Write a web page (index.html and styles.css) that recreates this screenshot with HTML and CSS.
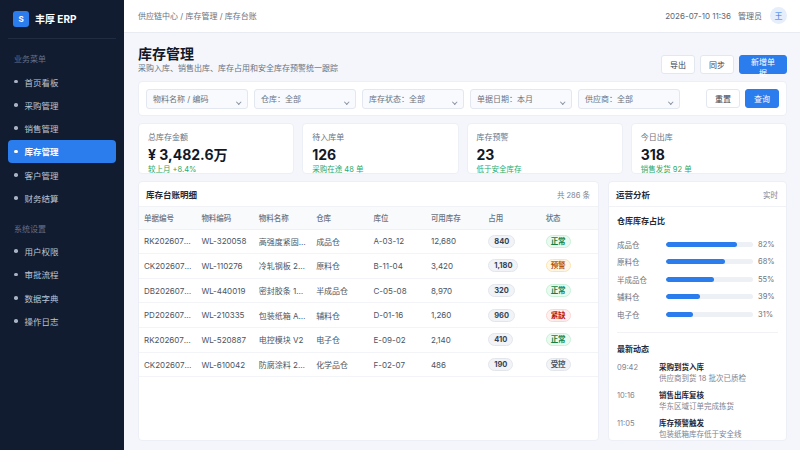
FILE: index.html
```html
<!DOCTYPE html>
<html lang="zh-CN">
<head>
<meta charset="utf-8">
<title>丰厚 ERP</title>
<link rel="stylesheet" href="styles.css">
</head>
<body>
<div class="app">
  <aside class="sidebar">
    <div class="brand"><span class="logo">S</span><span class="brand-name">丰厚 ERP</span></div>
    <div class="nav-label">业务菜单</div>
    <nav class="nav">
      <a class="nav-item"><i></i>首页看板</a>
      <a class="nav-item"><i></i>采购管理</a>
      <a class="nav-item"><i></i>销售管理</a>
      <a class="nav-item active"><i></i>库存管理</a>
      <a class="nav-item"><i></i>客户管理</a>
      <a class="nav-item"><i></i>财务结算</a>
    </nav>
    <div class="nav-label second">系统设置</div>
    <nav class="nav">
      <a class="nav-item"><i></i>用户权限</a>
      <a class="nav-item"><i></i>审批流程</a>
      <a class="nav-item"><i></i>数据字典</a>
      <a class="nav-item"><i></i>操作日志</a>
    </nav>
  </aside>
  <div class="main">
    <header class="topbar">
      <div class="crumbs">供应链中心 / 库存管理 / 库存台账</div>
      <div class="top-right"><span>2026-07-10 11:36</span><span>管理员</span><span class="avatar">王</span></div>
    </header>
    <div class="content">
      <div class="page-head">
        <div>
          <h1>库存管理</h1>
          <p>采购入库、销售出库、库存占用和安全库存预警统一跟踪</p>
        </div>
        <div class="actions">
          <button class="btn">导出</button>
          <button class="btn">同步</button>
          <button class="btn primary wide">新增单据</button>
        </div>
      </div>
      <div class="card filters">
        <div class="select">物料名称 / 编码</div>
        <div class="select">仓库：全部</div>
        <div class="select">库存状态：全部</div>
        <div class="select">单据日期：本月</div>
        <div class="select">供应商：全部</div>
        <div class="filter-btns">
          <button class="btn">重置</button>
          <button class="btn primary">查询</button>
        </div>
      </div>
      <div class="stats">
        <div class="card stat"><div class="stat-label">总库存金额</div><div class="stat-value">¥ 3,482.6万</div><div class="stat-note">较上月 +8.4%</div></div>
        <div class="card stat"><div class="stat-label">待入库单</div><div class="stat-value">126</div><div class="stat-note">采购在途 48 单</div></div>
        <div class="card stat"><div class="stat-label">库存预警</div><div class="stat-value">23</div><div class="stat-note">低于安全库存</div></div>
        <div class="card stat"><div class="stat-label">今日出库</div><div class="stat-value">318</div><div class="stat-note">销售发货 92 单</div></div>
      </div>
      <div class="panels">
        <section class="card panel table-panel">
          <div class="panel-head"><h2>库存台账明细</h2><span>共 286 条</span></div>
          <table>
            <thead><tr><th>单据编号</th><th>物料编码</th><th>物料名称</th><th>仓库</th><th>库位</th><th>可用库存</th><th>占用</th><th>状态</th></tr></thead>
            <tbody>
              <tr><td>RK20260710001</td><td>WL-320058</td><td>高强度紧固件套装</td><td>成品仓</td><td>A-03-12</td><td>12,680</td><td><b class="pill">840</b></td><td><b class="tag ok">正常</b></td></tr>
              <tr><td>CK20260710002</td><td>WL-110276</td><td>冷轧钢板 2.0mm</td><td>原料仓</td><td>B-11-04</td><td>3,420</td><td><b class="pill">1,180</b></td><td><b class="tag warn">预警</b></td></tr>
              <tr><td>DB20260710003</td><td>WL-440019</td><td>密封胶条 12mm</td><td>半成品仓</td><td>C-05-08</td><td>8,970</td><td><b class="pill">320</b></td><td><b class="tag ok">正常</b></td></tr>
              <tr><td>PD20260710004</td><td>WL-210335</td><td>包装纸箱 A型</td><td>辅料仓</td><td>D-01-16</td><td>1,260</td><td><b class="pill">960</b></td><td><b class="tag bad">紧缺</b></td></tr>
              <tr><td>RK20260710005</td><td>WL-520887</td><td>电控模块 V2</td><td>电子仓</td><td>E-09-02</td><td>2,140</td><td><b class="pill">410</b></td><td><b class="tag ok">正常</b></td></tr>
              <tr><td>CK20260710006</td><td>WL-610042</td><td>防腐涂料 20kg</td><td>化学品仓</td><td>F-02-07</td><td>486</td><td><b class="pill">190</b></td><td><b class="tag mute">受控</b></td></tr>
            </tbody>
          </table>
        </section>
        <section class="card panel side-panel">
          <div class="panel-head"><h2>运营分析</h2><span>实时</span></div>
          <div class="side-body">
            <h3>仓库库存占比</h3>
            <div class="bars">
              <div class="bar-row"><span>成品仓</span><div class="track"><div class="fill" style="width:82%"></div></div><em>82%</em></div>
              <div class="bar-row"><span>原料仓</span><div class="track"><div class="fill" style="width:68%"></div></div><em>68%</em></div>
              <div class="bar-row"><span>半成品仓</span><div class="track"><div class="fill" style="width:55%"></div></div><em>55%</em></div>
              <div class="bar-row"><span>辅料仓</span><div class="track"><div class="fill" style="width:39%"></div></div><em>39%</em></div>
              <div class="bar-row"><span>电子仓</span><div class="track"><div class="fill" style="width:31%"></div></div><em>31%</em></div>
            </div>
            <h3 class="feed-title">最新动态</h3>
            <div class="feed">
              <div class="feed-item"><time>09:42</time><div><strong>采购到货入库</strong><small>供应商到货 18 批次已质检</small></div></div>
              <div class="feed-item"><time>10:16</time><div><strong>销售出库复核</strong><small>华东区域订单完成拣货</small></div></div>
              <div class="feed-item"><time>11:05</time><div><strong>库存预警触发</strong><small>包装纸箱库存低于安全线</small></div></div>
            </div>
          </div>
        </section>
      </div>
    </div>
  </div>
</div>
</body>
</html>
```
FILE: styles.css
```css
* { box-sizing: border-box; }
html, body { margin: 0; height: 100%; overflow: hidden; }
body {
  width: 800px; height: 450px;
  font-family: Inter, "Noto Sans CJK SC", sans-serif;
  font-size: 8px; color: #1f2937; background: #f4f6fb;
}
.app { display: flex; height: 450px; }

.sidebar { width: 124px; flex: none; background: #121c30; padding: 0 8px; color: #c3cbd8; }
.brand { height: 39px; display: flex; align-items: center; gap: 6px; margin: 0 0 14px; padding: 0 5px 1px; border-bottom: 1px solid #212c42; }
.logo { width: 16px; height: 16px; border-radius: 3px; background: #2b7cec; color: #fff; font-size: 8px; font-weight: 700; display: flex; align-items: center; justify-content: center; }
.brand-name { font-size: 10px; font-weight: 700; color: #fff; }
.nav-label { font-size: 8px; color: #64708a; padding-left: 6px; line-height: 12px; margin-bottom: 5px; }
.nav-label.second { margin-top: 13px; }
.nav { display: flex; flex-direction: column; gap: 0.33px; }
.nav-item { height: 23px; display: flex; align-items: center; gap: 7px; padding-left: 6px; font-size: 8.5px; border-radius: 4px; color: #bcc5d3; }
.nav-item i { width: 3.5px; height: 3.5px; border-radius: 50%; background: #a9b3c4; }
.nav-item.active { background: #2b7cec; color: #fff; font-weight: 600; }
.nav-item.active i { background: #fff; }

.main { flex: 1; min-width: 0; display: flex; flex-direction: column; }
.topbar { height: 33px; flex: none; background: #fff; border-bottom: 1px solid #e8ebf2; display: flex; align-items: center; justify-content: space-between; padding: 0 13px 1px 14px; color: #6b7280; font-size: 8px; }
.top-right { display: flex; align-items: center; gap: 7px; color: #5f6774; }
.avatar { width: 17px; height: 17px; border-radius: 50%; background: #e6edfb; color: #2b7cec; display: flex; align-items: center; justify-content: center; margin-left: 1px; }

.content { flex: 1; min-height: 0; padding: 11px 13px 9px 14px; display: flex; flex-direction: column; gap: 7px; }
.page-head { display: flex; justify-content: space-between; align-items: flex-end; height: 30px; flex: none; }
h1 { margin: 0; font-size: 14px; line-height: 18px; font-weight: 700; color: #111827; }
.page-head p { margin: 0; font-size: 8px; line-height: 11px; color: #6b7280; }
.actions { display: flex; gap: 5px; margin-top: 0; padding-bottom: 0; }
.btn { height: 19px; min-width: 33px; padding: 0 8px; font: inherit; font-size: 8px; border: 1px solid #e3e7ef; border-radius: 3px; background: #fff; color: #374151; }
.btn.primary { background: #2b7cec; border-color: #2b7cec; color: #fff; }
.btn.wide { width: 48px; }

.card { background: #fff; border: 1px solid #eceff5; border-radius: 4px; }
.filters { height: 35px; flex: none; display: flex; align-items: center; gap: 6px; padding: 0 7px; }
.select { width: 102px; height: 20px; padding: 0 6px; display: flex; align-items: center; background: #f8fafd; border: 1px solid #e3e7ef; border-radius: 3px; color: #6b7280; position: relative; }
.select::after { content: ""; position: absolute; right: 7px; top: 10px; width: 2.5px; height: 2.5px; border-right: 1px solid #8a93a3; border-bottom: 1px solid #8a93a3; transform: rotate(45deg); }
.select:nth-child(n+2) { width: 102px; }
.filter-btns { margin-left: auto; display: flex; gap: 5px; }

.stats { height: 51px; flex: none; display: grid; grid-template-columns: repeat(4, 1fr); gap: 8px; }
.stat { padding: 8px 9px 0; overflow: hidden; min-width: 0; }
.stat-label { color: #6b7280; font-size: 8px; line-height: 11px; }
.stat-value { font-size: 14px; font-weight: 700; line-height: 17px; margin-top: 3px; color: #111827; }
.stat-note { font-size: 7.5px; line-height: 10px; margin-top: 2px; color: #2ba866; }

.panels { flex: 1; min-height: 0; display: flex; gap: 9px; }
.panel { overflow: hidden; display: flex; flex-direction: column; }
.table-panel { width: 461px; flex: none; }
.side-panel { flex: 1; min-width: 0; }
.panel-head { height: 25px; flex: none; display: flex; align-items: center; justify-content: space-between; padding: 0 8px 0 7px; border-bottom: 1px solid #f0f2f6; }
h2 { margin: 0; font-size: 8.5px; font-weight: 700; color: #1f2937; }
.panel-head span { color: #7b8494; font-size: 7.5px; }

table { width: 100%; table-layout: fixed; border-collapse: collapse; }
th { height: 22px; padding: 0 5px; text-align: left; font-weight: 500; font-size: 7.5px; color: #6b7280; background: #f8fafc; border-bottom: 1px solid #eef1f5; }
td { height: 24.67px; padding: 0 5px; font-size: 8px; color: #4b5563; border-bottom: 1px solid #f2f4f7; white-space: nowrap; overflow: hidden; text-overflow: ellipsis; }
.pill, .tag { display: inline-block; height: 13px; line-height: 11px; border-radius: 7px; font-size: 7.5px; font-weight: 700; text-align: center; border: 1px solid; vertical-align: middle; }
.pill { min-width: 24px; padding: 0 5px; background: #f1f3f7; border-color: #e2e6ec; color: #374151; }
.tag { width: 25px; }
.ok { background: #e9fbf0; border-color: #c8f1d8; color: #15803d; }
.warn { background: #fff7e6; border-color: #fde3ae; color: #b45309; }
.bad { background: #fff0f0; border-color: #fdd5d5; color: #b91c1c; }
.mute { background: #f1f3f7; border-color: #e2e6ec; color: #4b5563; }

.side-body { padding: 8px 8px 0 8px; }
h3 { margin: 0; font-size: 8px; line-height: 12px; font-weight: 700; color: #1f2937; }
.bars { margin-top: 11px; padding-bottom: 12px; border-bottom: 1px solid #f0f2f6; display: flex; flex-direction: column; gap: 5.6px; }
.bar-row { height: 12px; display: flex; align-items: center; color: #6b7280; font-size: 7.5px; }
.bar-row span { width: 49px; flex: none; }
.track { width: 87px; height: 5px; flex: none; border-radius: 3px; background: #edf0f5; overflow: hidden; }
.fill { height: 100%; border-radius: 3px; background: #2b7cec; }
.bar-row em { font-style: normal; margin-left: 5px; }
.feed-title { margin-top: 10px; }
.feed { margin-top: 7px; display: flex; flex-direction: column; gap: 5px; }
.feed-item { display: flex; height: 23px; }
.feed-item time { width: 42px; flex: none; color: #7b8494; font-size: 7.5px; line-height: 11px; }
.feed-item strong { display: block; font-size: 7.5px; line-height: 11px; font-weight: 700; color: #1f2937; }
.feed-item small { display: block; font-size: 7.5px; line-height: 12px; color: #7b8494; }
```
